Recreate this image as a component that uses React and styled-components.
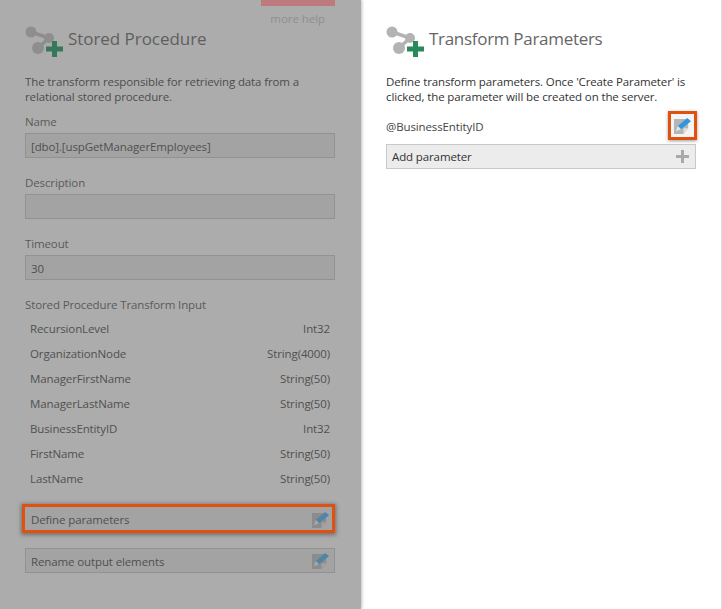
import React from 'react';
import styled, { createGlobalStyle } from 'styled-components';

const GlobalStyle = createGlobalStyle`
  html, body { margin: 0; padding: 0; background: #fff; }
  body { font-family: "Open Sans", "Noto Sans", sans-serif; }
`;

const Page = styled.div`
  width: 722px;
  height: 609px;
  display: flex;
  overflow: hidden;
`;

const LeftPane = styled.div`
  width: 361px;
  height: 609px;
  box-sizing: border-box;
  padding: 26px 26px 0 25px;
  background: #acacac;
  color: #555;
  position: relative;
  box-shadow: 1px 0 3px rgba(0, 0, 0, 0.25);
  z-index: 1;
`;

const RightPane = styled.div`
  flex: 1;
  height: 609px;
  box-sizing: border-box;
  padding: 26px 25px 0 25px;
  background: #fff;
  color: #444;
  border-right: 1px solid #ddd;
`;

const HelpBar = styled.div`
  position: absolute;
  top: 0;
  right: 26px;
  width: 74px;
  height: 6px;
  background: #bd7a7c;
`;

const HelpLink = styled.div`
  position: absolute;
  top: 11px;
  right: 36px;
  font-size: 11.5px;
  color: #8f8f8f;
  letter-spacing: -0.05px;
`;

const Header = styled.div`
  display: flex;
  align-items: flex-start;
  height: 32px;
`;

const Title = styled.h1`
  margin: 1px 0 0 5px;
  font-size: 17px;
  font-weight: 400;
  line-height: 24px;
  color: ${({ $dim }) => ($dim ? '#5f5f5f' : '#666')};
  letter-spacing: ${({ $dim }) => ($dim ? '-0.05px' : '-0.3px')};
`;

const Description = styled.p`
  margin: 16px 0 0;
  font-size: 11.5px;
  line-height: 15px;
  letter-spacing: -0.12px;
  color: ${({ $dim }) => ($dim ? '#4c4c4c' : '#333')};
`;

const FieldLabel = styled.div`
  margin-top: ${({ $top }) => $top}px;
  font-size: 11.5px;
  line-height: 16px;
  letter-spacing: -0.12px;
  color: #5a5a5a;
`;

const TextBox = styled.div`
  box-sizing: border-box;
  height: 25px;
  margin-top: 3px;
  padding-left: 5px;
  border: 1px solid #929292;
  background: #a3a3a3;
  font-size: 11.5px;
  line-height: 25px;
  letter-spacing: -0.12px;
  color: #505050;
`;

const ColumnList = styled.div`
  margin-top: 3px;
`;

const ColumnRow = styled.div`
  display: flex;
  justify-content: space-between;
  height: 25px;
  padding: 0 5px;
  font-size: 11.5px;
  line-height: 25px;
  letter-spacing: -0.12px;
  color: #505050;
`;

const ActionButton = styled.div`
  box-sizing: border-box;
  display: flex;
  align-items: center;
  justify-content: space-between;
  height: 25px;
  margin-top: ${({ $top }) => $top}px;
  padding: 0 5px;
  border: 1px solid ${({ $light }) => ($light ? '#c9c9c9' : '#929292')};
  background: ${({ $light }) => ($light ? '#ececec' : '#a3a3a3')};
  font-size: 11.5px;
  letter-spacing: -0.12px;
  color: ${({ $light }) => ($light ? '#333' : '#505050')};
`;

const MarkedButton = styled(ActionButton)`
  height: 29px;
  margin-left: -3px;
  padding: 1px 3px 0 6px;
  border: 3px solid #e0510f;
  box-shadow: 0 1px 4px 1px rgba(0, 0, 0, 0.35);
`;

const ButtonLabel = styled.span`
  padding-top: 1px;
`;

const ParamRow = styled.div`
  display: flex;
  align-items: center;
  justify-content: space-between;
  height: 29px;
  margin: 7px -1px 0 0;
  font-size: 11.5px;
  letter-spacing: -0.12px;
  color: #444;
`;

const EditMark = styled.div`
  box-sizing: border-box;
  width: 29px;
  height: 29px;
  display: flex;
  align-items: center;
  justify-content: center;
  border: 3px solid #e0510f;
  background: #f4f4f4;
  box-shadow: 0 1px 3px rgba(0, 0, 0, 0.4);
`;

const ParamName = styled.span`
  padding-top: 2px;
`;

const PlusSvg = styled.svg`
  margin-right: 1px;
`;

const TransformIcon = ({ dim }) => {
  const node = dim ? '#8e8e8e' : '#b3b3b3';
  const plus = dim ? '#36785a' : '#278a5b';
  return (
    <svg width="38" height="32" viewBox="0 0 38 32">
      <path d="M6 6 L24 12 L13 22" fill="none" stroke={node} strokeWidth="3.6" />
      <circle cx="6" cy="6" r="5.5" fill={node} />
      <circle cx="24" cy="12" r="5" fill={node} />
      <circle cx="13" cy="22" r="6" fill={node} />
      <path d="M21 20.5h17v5H21z M27 15h5v16h-5z" fill={plus} />
    </svg>
  );
};

const EditIcon = ({ dim }) => {
  const sheet = dim ? '#8c8c8c' : '#b5b5b5';
  const corner = dim ? '#a0a0a0' : '#dedede';
  const pen = dim ? '#4f86a8' : '#2f96dc';
  const tip = dim ? '#a9a9a9' : '#d8e8f2';
  return (
    <svg width="17" height="17" viewBox="0 0 18 18">
      <path d="M0 2h15v10l-5 6H0z" fill={sheet} />
      <path d="M10 18v-6h5z" fill={corner} />
      <path d="M4 9.5 L14 1 L18 4.5 L7.5 13z" fill={pen} />
      <path d="M2 15 L4 9.5 L7.5 13z" fill={tip} />
    </svg>
  );
};

const PlusIcon = () => (
  <PlusSvg width="13" height="13" viewBox="0 0 13 13">
    <path d="M0 5h13v3H0z M5 0h3v13H5z" fill="#a9a9a9" />
  </PlusSvg>
);

const columns = [
  ['RecursionLevel', 'Int32'],
  ['OrganizationNode', 'String(4000)'],
  ['ManagerFirstName', 'String(50)'],
  ['ManagerLastName', 'String(50)'],
  ['BusinessEntityID', 'Int32'],
  ['FirstName', 'String(50)'],
  ['LastName', 'String(50)'],
];

const App = () => (
  <Page>
    <GlobalStyle />
    <LeftPane>
      <HelpBar />
      <HelpLink>more help</HelpLink>
      <Header>
        <TransformIcon dim />
        <Title $dim>Stored Procedure</Title>
      </Header>
      <Description $dim>
        The transform responsible for retrieving data from a relational stored procedure.
      </Description>
      <FieldLabel $top={10}>Name</FieldLabel>
      <TextBox>[dbo].[uspGetManagerEmployees]</TextBox>
      <FieldLabel $top={17}>Description</FieldLabel>
      <TextBox />
      <FieldLabel $top={17}>Timeout</FieldLabel>
      <TextBox>30</TextBox>
      <FieldLabel $top={17}>Stored Procedure Transform Input</FieldLabel>
      <ColumnList>
        {columns.map(([name, type]) => (
          <ColumnRow key={name}>
            <span>{name}</span>
            <span>{type}</span>
          </ColumnRow>
        ))}
      </ColumnList>
      <MarkedButton $top={13}>
        Define parameters
        <EditIcon dim />
      </MarkedButton>
      <ActionButton $top={15}>
        <ButtonLabel>Rename output elements</ButtonLabel>
        <EditIcon dim />
      </ActionButton>
    </LeftPane>
    <RightPane>
      <Header>
        <TransformIcon />
        <Title>Transform Parameters</Title>
      </Header>
      <Description>
        Define transform parameters. Once 'Create Parameter' is clicked, the parameter will be created on the server.
      </Description>
      <ParamRow>
        <ParamName>@BusinessEntityID</ParamName>
        <EditMark>
          <EditIcon />
        </EditMark>
      </ParamRow>
      <ActionButton $top={4} $light>
        Add parameter
        <PlusIcon />
      </ActionButton>
    </RightPane>
  </Page>
);

export default App;
